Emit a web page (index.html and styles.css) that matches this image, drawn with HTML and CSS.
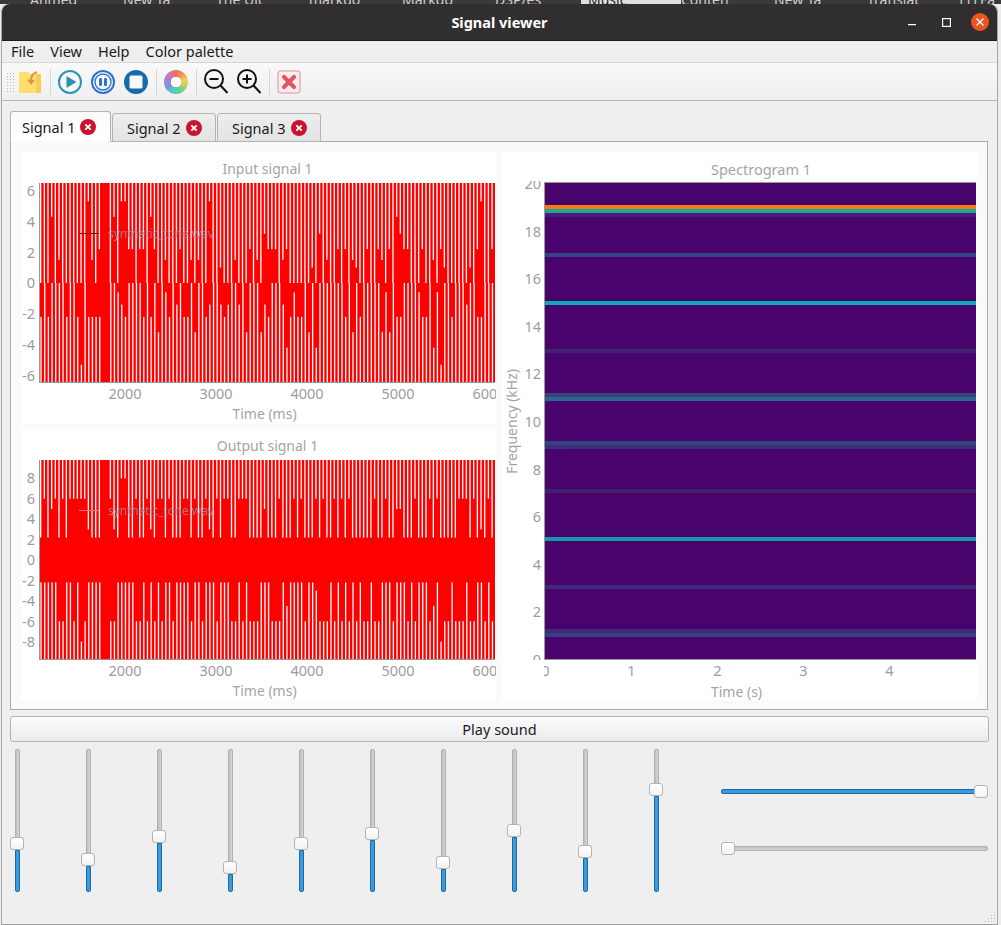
FILE: index.html
```html
<!DOCTYPE html>
<html lang="en">
<head>
    <meta charset="UTF-8">
    <title>Signal viewer</title>
    <link rel="stylesheet" href="styles.css">
</head>
<body>
    <div class="browser-tabs">
        <span>Ahmed</span><span>New Ta</span><span>The Ult</span><span>markdo</span><span>Markdo</span><span>DSP/es</span>
        <span class="browser-tab-active">Music</span><span>Conten</span><span>New Ta</span><span>Translat</span><span>(1) Fa</span>
    </div>

    <div class="window">
        <div class="titlebar">
            <span class="title">Signal viewer</span>
            <svg class="win-btn win-min" width="8" height="8" viewBox="0 0 8 8"><rect y="6" width="8" height="1.2" fill="#fff"/></svg>
            <svg class="win-btn win-max" width="9" height="9" viewBox="0 0 9 9"><rect x=".6" y=".6" width="7.8" height="7.8" fill="none" stroke="#fff" stroke-width="1.2"/></svg>
            <svg class="win-btn win-close" width="18" height="18" viewBox="0 0 18 18"><circle cx="9" cy="9" r="9" fill="#e95420"/><path d="M5.5 5.5l7 7M12.500 5.5l-7 7" stroke="#fff" stroke-width="1.3"/></svg>
        </div>

        <div class="menubar">
            <span>File</span><span>View</span><span>Help</span><span>Color palette</span>
        </div>

        <div class="toolbar">
            <div class="tool-handle"></div>
            <div class="tool">
                <svg width="24" height="24" viewBox="0 0 24 24">
                    <path d="M1 2h9l2 2h5l6 0v19H1z" fill="#fbe06c"/>
                    <path d="M18 4h5v19h-5z" fill="#f6cf58"/>
                    <path d="M19 2c-3 1-6 3-6 8" fill="none" stroke="#f0903c" stroke-width="2"/>
                    <path d="M9 9.500l4 5.500 4-5z" fill="#f0903c"/>
                </svg>
            </div>
            <div class="tool-sep"></div>
            <div class="tool">
                <svg width="26" height="26" viewBox="0 0 26 26">
                    <circle cx="13" cy="13" r="11" fill="#f8f8f8" stroke="#2a93b8" stroke-width="2"/>
                    <path d="M9.500 7l10 6-10 6z" fill="#2a93b8"/>
                </svg>
            </div>
            <div class="tool">
                <svg width="26" height="26" viewBox="0 0 26 26">
                    <circle cx="13" cy="13" r="11" fill="#f8f8f8" stroke="#2d74cf" stroke-width="2"/>
                    <circle cx="13" cy="13" r="8" fill="none" stroke="#2d74cf" stroke-width="1.4"/>
                    <rect x="9" y="9" width="3" height="8" rx="1.2" fill="#2d74cf"/>
                    <rect x="14" y="9" width="3" height="8" rx="1.2" fill="#2d74cf"/>
                </svg>
            </div>
            <div class="tool">
                <svg width="26" height="26" viewBox="0 0 26 26">
                    <circle cx="13" cy="13" r="12" fill="#1a69ad"/>
                    <rect x="6.500" y="6.500" width="13" height="13" rx="1.500" fill="#f6f8fa"/>
                </svg>
            </div>
            <div class="tool-sep"></div>
            <div class="tool"><div class="wheel"></div></div>
            <div class="tool-sep"></div>
            <div class="tool">
                <svg width="26" height="26" viewBox="0 0 26 26">
                    <circle cx="11" cy="10" r="9" fill="none" stroke="#111" stroke-width="2"/>
                    <path d="M6.500 10h9M17.500 16.500l7 7.500" stroke="#111" stroke-width="2" fill="none"/>
                </svg>
            </div>
            <div class="tool">
                <svg width="26" height="26" viewBox="0 0 26 26">
                    <circle cx="11" cy="10" r="9" fill="none" stroke="#111" stroke-width="2"/>
                    <path d="M6.500 10h9M11 5.500v9M17.500 16.500l7 7.500" stroke="#111" stroke-width="2" fill="none"/>
                </svg>
            </div>
            <div class="tool-sep"></div>
            <div class="tool">
                <svg width="24" height="24" viewBox="0 0 24 24">
                    <rect x="1" y="1" width="22" height="22" rx="3" fill="#f8eef0" stroke="#eeb0b6" stroke-width="1.600"/>
                    <path d="M7 7l10 10M17 7L7 17" stroke="#e25563" stroke-width="4.200" stroke-linecap="round"/>
                </svg>
            </div>
        </div>

        <div class="content">
            <div class="tabs">
                <div class="tab tab-active">Signal 1
                    <svg class="tab-x" width="16" height="16" viewBox="0 0 16 16"><circle cx="8" cy="8" r="8" fill="#c8152f"/><path d="M5.300 5.300l5.400 5.400M10.700 5.300l-5.400 5.400" stroke="#fff" stroke-width="1.800"/></svg>
                </div>
                <div class="tab">Signal 2
                    <svg class="tab-x" width="16" height="16" viewBox="0 0 16 16"><circle cx="8" cy="8" r="8" fill="#c8152f"/><path d="M5.300 5.300l5.400 5.400M10.700 5.300l-5.400 5.400" stroke="#fff" stroke-width="1.800"/></svg>
                </div>
                <div class="tab">Signal 3
                    <svg class="tab-x" width="16" height="16" viewBox="0 0 16 16"><circle cx="8" cy="8" r="8" fill="#c8152f"/><path d="M5.300 5.300l5.400 5.400M10.700 5.300l-5.400 5.400" stroke="#fff" stroke-width="1.800"/></svg>
                </div>
            </div>

            <div class="pane">
                <div class="plots-left">
                    <div class="plot-card">
                        <div class="plot-title">Input signal 1</div>
                        <div class="y-ticks y-ticks-input">
                            <span>6</span><span>4</span><span>2</span><span>0</span><span>-2</span><span>-4</span><span>-6</span>
                        </div>
                        <div class="plot-area">
                            <canvas id="inputPlot" width="457" height="200"></canvas>
                            <div class="legend"><i class="legend-line legend-dark"></i>synthetic_tone.wav</div>
                        </div>
                        <div class="x-ticks">
                            <span>2000</span><span>3000</span><span>4000</span><span>5000</span><span>6000</span>
                        </div>
                        <div class="axis-title">Time (ms)</div>
                    </div>

                    <div class="plot-card plot-card-low">
                        <div class="plot-title">Output signal 1</div>
                        <div class="y-ticks y-ticks-output">
                            <span>8</span><span>6</span><span>4</span><span>2</span><span>0</span><span>-2</span><span>-4</span><span>-6</span><span>-8</span>
                        </div>
                        <div class="plot-area">
                            <canvas id="outputPlot" width="457" height="200"></canvas>
                            <div class="legend"><i class="legend-line"></i>synthetic_tone.wav</div>
                        </div>
                        <div class="x-ticks">
                            <span>2000</span><span>3000</span><span>4000</span><span>5000</span><span>6000</span>
                        </div>
                        <div class="axis-title">Time (ms)</div>
                    </div>
                </div>

                <div class="spectro-card">
                    <div class="plot-title spectro-title">Spectrogram 1</div>
                    <div class="freq-label">Frequency (kHz)</div>
                    <div class="freq-ticks">
                        <div class="freq-ticks-inner">
                            <span>20</span><span>18</span><span>16</span><span>14</span><span>12</span><span>10</span><span>8</span><span>6</span><span>4</span><span>2</span><span>0</span>
                        </div>
                    </div>
                    <canvas id="spectrogram" width="432" height="478"></canvas>
                    <div class="sec-ticks">
                        <div class="sec-ticks-inner">
                            <span>0</span><span>1</span><span>2</span><span>3</span><span>4</span>
                        </div>
                    </div>
                    <div class="axis-title sec-title">Time (s)</div>
                </div>
            </div>

            <button class="play-btn">Play sound</button>

            <div class="controls">
                <div class="eq">
                    <div class="vslider"><div class="vtrack"></div><div class="thumb"></div><div class="vfill" style="height: 42px"></div></div>
                    <div class="vslider"><div class="vtrack"></div><div class="thumb"></div><div class="vfill" style="height: 26px"></div></div>
                    <div class="vslider"><div class="vtrack"></div><div class="thumb"></div><div class="vfill" style="height: 49px"></div></div>
                    <div class="vslider"><div class="vtrack"></div><div class="thumb"></div><div class="vfill" style="height: 18px"></div></div>
                    <div class="vslider"><div class="vtrack"></div><div class="thumb"></div><div class="vfill" style="height: 42px"></div></div>
                    <div class="vslider"><div class="vtrack"></div><div class="thumb"></div><div class="vfill" style="height: 52px"></div></div>
                    <div class="vslider"><div class="vtrack"></div><div class="thumb"></div><div class="vfill" style="height: 23px"></div></div>
                    <div class="vslider"><div class="vtrack"></div><div class="thumb"></div><div class="vfill" style="height: 55px"></div></div>
                    <div class="vslider"><div class="vtrack"></div><div class="thumb"></div><div class="vfill" style="height: 34px"></div></div>
                    <div class="vslider"><div class="vtrack"></div><div class="thumb"></div><div class="vfill" style="height: 96px"></div></div>
                </div>
                <div class="hsliders">
                    <div class="hslider"><div class="hfill"></div><div class="thumb"></div></div>
                    <div class="hslider"><div class="thumb"></div><div class="htrack"></div></div>
                </div>
            </div>
        </div>

        <svg class="grip" width="12" height="12" viewBox="0 0 12 12" fill="#b4b4b4">
            <rect x="10" y="1" width="1" height="1"/>
            <rect x="7" y="4" width="1" height="1"/><rect x="10" y="4" width="1" height="1"/>
            <rect x="4" y="7" width="1" height="1"/><rect x="7" y="7" width="1" height="1"/><rect x="10" y="7" width="1" height="1"/>
            <rect x="1" y="10" width="1" height="1"/><rect x="4" y="10" width="1" height="1"/><rect x="7" y="10" width="1" height="1"/><rect x="10" y="10" width="1" height="1"/>
        </svg>
    </div>

    <script src="script.js"></script>
</body>
</html>
```

FILE: styles.css
```css
* {
    box-sizing: border-box;
}
body {
    margin: 0;
    width: 1001px;
    height: 925px;
    overflow: hidden;
    background: #ececec;
    font-family: "Noto Sans", sans-serif;
    font-size: 14.5px;
    color: #1a1a1a;
}

.browser-tabs {
    display: grid;
    grid-template-columns: repeat(11, 93px);
    height: 4px;
    padding-left: 30px;
    overflow: hidden;
    background: #3b3a3a;
    color: #cfcfcf;
    font-size: 14px;
    line-height: 0;
}
.browser-tab-active {
    color: #222;
    background: #e0e0e0;
    margin-left: -7px;
    padding-left: 7px;
}

.window {
    position: relative;
    width: 997px;
    height: 921px;
    margin-left: 1px;
    background: #efefef;
    border-left: 1px solid #a8a8a8;
    border-right: 1px solid #a8a8a8;
    border-bottom: 1px solid #a0a0a0;
    border-radius: 8px 8px 0 0;
}

.titlebar {
    position: relative;
    display: flex;
    align-items: center;
    justify-content: center;
    height: 37px;
    background: #302e2e;
    border-bottom: 1px solid #1c1b1b;
    border-radius: 8px 8px 0 0;
}
.title {
    color: #fff;
    font-weight: 700;
    font-size: 14.5px;
}
.win-btn {
    position: absolute;
}
.win-min {
    left: 906px;
    top: 14px;
}
.win-max {
    left: 940px;
    top: 14px;
}
.win-close {
    left: 969px;
    top: 9px;
}

.menubar {
    display: flex;
    gap: 16px;
    align-items: center;
    height: 21px;
    padding: 0 0 2px 9px;
    background: #eeeeee;
}

.toolbar {
    display: flex;
    align-items: center;
    height: 39px;
    padding-left: 4px;
    background: linear-gradient(#f9f9f9, #efefef);
    border-top: 1px solid #d6d6d6;
    border-bottom: 1px solid #b8b8b8;
}
.tool-handle {
    width: 7.5px;
    height: 20px;
    background-image: radial-gradient(#bbbbbb 0.7px, transparent 0.8px);
    background-size: 3px 3px;
}
.tool {
    display: flex;
    align-items: center;
    justify-content: center;
    width: 33px;
}
.tool-sep {
    width: 7px;
    height: 26px;
    background: linear-gradient(#d6d6d6, #d6d6d6) center / 1px 100% no-repeat;
}
.wheel {
    width: 24px;
    height: 24px;
    border-radius: 50%;
    background:
        radial-gradient(#fdfdfd 0 5px, transparent 5.5px),
        conic-gradient(#ee6e5e, #f19a4e, #f3cf5c, #a9d468, #62cf93, #5cc7c4, #6f9be0, #a283dc, #cf78b8, #ee6e5e);
}

.content {
    padding: 10px 8px 0 8px;
}

.tabs {
    display: flex;
    gap: 1px;
    align-items: flex-end;
    height: 31px;
    margin-bottom: -1px;
}
.tab {
    position: relative;
    display: flex;
    align-items: center;
    gap: 5px;
    width: 104px;
    height: 29px;
    padding: 0 0 0 14px;
    background: linear-gradient(#ededed, #e3e3e3);
    border: 1px solid #b4b4b4;
    border-radius: 3px 3px 0 0;
}
.tab-active {
    gap: 4px;
    width: 101px;
    height: 31px;
    padding-left: 11px;
    background: linear-gradient(#fafafa, #ffffff);
    border-bottom: 1px solid #fafafa;
    z-index: 1;
}

.pane {
    display: flex;
    gap: 6px;
    width: 978px;
    height: 569px;
    padding: 10px;
    background: #fafafa;
    border: 1px solid #aaaaaa;
}
.plots-left {
    display: flex;
    flex-direction: column;
    gap: 5px;
    width: 475px;
}
.plot-card {
    display: grid;
    grid-template-columns: 18px 457px;
    grid-template-rows: 31px 200px 20px 1fr;
    height: 272px;
    background: #fff;
    color: #a2a2a2;
}
.plot-card-low {
    height: 271px;
}
.plot-title {
    grid-column: 1 / -1;
    padding-top: 7px;
    padding-left: 18px;
    text-align: center;
    font-size: 14px;
    line-height: 20px;
    color: #a4a4a4;
}
.spectro-title {
    padding-left: 44px;
    font-size: 14.5px;
}
.y-ticks {
    display: flex;
    flex-direction: column;
    justify-content: space-between;
    align-items: flex-end;
    padding-right: 4px;
    line-height: 14px;
    color: #9c9ca0;
}
.y-ticks-input {
    padding-bottom: 1px;
}
.y-ticks-output {
    padding-top: 10px;
    padding-bottom: 12px;
}
.y-ticks span,
.freq-ticks span {
    white-space: nowrap;
}
.plot-area {
    position: relative;
    line-height: 0;
}
.legend {
    position: absolute;
    left: 40px;
    top: 41px;
    display: flex;
    align-items: center;
    gap: 9px;
    height: 18px;
    line-height: 18px;
    color: rgba(150, 150, 170, 0.8);
    font-size: 11.8px;
}
.legend-line {
    width: 20px;
    height: 1px;
    background: #ff6a6a;
}
.legend-dark {
    background: #7a1010;
}
.x-ticks {
    grid-column: 2;
    display: flex;
    padding-left: 40.5px;
    overflow: hidden;
    line-height: 20px;
    color: #9c9ca0;
}
.x-ticks span {
    flex: 0 0 91px;
    text-align: center;
}
.axis-title {
    grid-column: 1 / -1;
    padding-left: 12px;
    text-align: center;
    font-size: 14px;
    line-height: 21px;
    color: #a4a4a4;
}

.spectro-card {
    display: grid;
    grid-template-columns: 20px 22px 432px;
    grid-template-rows: 30px 478px 21px 1fr;
    width: 475px;
    height: 548px;
    background: #fff;
}
.freq-label {
    grid-row: 2;
    justify-self: center;
    align-self: center;
    writing-mode: vertical-rl;
    transform: rotate(180deg);
    font-size: 14px;
    line-height: 18px;
    color: #a4a4a4;
}
.freq-ticks {
    grid-row: 2;
    overflow: hidden;
    margin-top: -1px;
    padding-top: 1px;
}
.freq-ticks-inner {
    display: flex;
    flex-direction: column;
    justify-content: space-between;
    align-items: flex-end;
    height: 490px;
    margin-top: -6px;
    padding-right: 3px;
    line-height: 14px;
    color: #9c9ca0;
}
.sec-ticks {
    grid-column: 3;
    overflow: hidden;
    line-height: 20px;
    color: #9c9ca0;
}
.sec-ticks-inner {
    display: flex;
    margin-left: -41.5px;
}
.sec-ticks span {
    flex: 0 0 86px;
    text-align: center;
}
.sec-title {
    padding-left: 0;
    padding-right: 5px;
}

.play-btn {
    display: block;
    width: 979px;
    height: 26px;
    margin-top: 6px;
    padding: 0;
    background: linear-gradient(#fbfbfb, #ececec);
    border: 1px solid #b4b4b4;
    border-radius: 3px;
    font-family: inherit;
    font-size: 14.5px;
    color: #1a1a2a;
}

.controls {
    display: flex;
    justify-content: space-between;
    margin-top: 7px;
}
.eq {
    display: flex;
    gap: 57px;
}
.vslider {
    display: flex;
    flex-direction: column;
    align-items: center;
    width: 14px;
    height: 143px;
}
.vtrack {
    flex: 1;
    width: 5px;
    margin-bottom: -1px;
    background: linear-gradient(90deg, #bdbdbd, #d8d8d8);
    border: 1px solid #b0b0b0;
    border-radius: 2px 2px 0 0;
}
.vfill {
    width: 5px;
    background: #3a9be0;
    border: 1px solid #20689f;
    border-radius: 0 0 2px 2px;
}
.thumb {
    position: relative;
    flex: none;
    width: 14px;
    height: 13px;
    background: linear-gradient(#ffffff, #f2f2f2);
    border: 1px solid #b4b4b4;
    border-radius: 3px;
    z-index: 1;
}
.hsliders {
    display: flex;
    flex-direction: column;
    gap: 44px;
    width: 267px;
    margin-right: 1px;
    padding-top: 36px;
}
.hslider {
    display: flex;
    align-items: center;
    height: 13px;
}
.hfill {
    flex: 1;
    height: 5px;
    margin-right: -1px;
    background: #3a9be0;
    border: 1px solid #20689f;
    border-radius: 2px 0 0 2px;
}
.htrack {
    flex: 1;
    height: 5px;
    margin-left: -1px;
    background: linear-gradient(#bdbdbd, #d8d8d8);
    border: 1px solid #b0b0b0;
    border-radius: 0 2px 2px 0;
}

.grip {
    position: absolute;
    right: 1px;
    bottom: 1px;
}
```

FILE: script.js
```js
// small seeded random so the picture is the same every load
let seed = 1;
function rnd() {
    seed = (seed * 48271) % 2147483647;
    return seed / 2147483647;
}

function pick(table) {
    let r = rnd();
    for (const [level, chance] of table) {
        if (r < chance) return level;
        r -= chance;
    }
    return table[table.length - 1][0];
}

const PERIOD = 3.67;

function drawSignal(id, zero, scale, topLevels, bottomLevels) {
    const canvas = document.getElementById(id);
    const ctx = canvas.getContext('2d');
    const w = canvas.width;
    const h = canvas.height;
    ctx.fillStyle = '#ff0000';
    ctx.fillRect(0, 0, w - 1, h);
    ctx.fillStyle = '#ffffff';
    seed = 987654321;
    for (let x = 1; x < w - 3; x += PERIOD) {
        const top = pick(topLevels);
        const bottom = pick(bottomLevels);
        // one wider bar near the start of the recording
        if (x > 62 && x < 68) continue;
        ctx.fillRect(x, 0, 1.3, zero - top * scale);
        const y = zero - bottom * scale;
        ctx.fillRect(x + 0.4, y, 1.3, h - y);
    }
    // axis lines
    ctx.fillStyle = '#9a9a9a';
    ctx.fillRect(0, h - 1, w - 1, 1);
    ctx.fillRect(0, 0, 1, h);
}

drawSignal('inputPlot', 100, 15.4,
    [[0, 0.6], [1.5, 0.12], [2.2, 0.16], [1, 0.03], [3.2, 0.03], [4.3, 0.03], [5.3, 0.03]],
    [[0, 0.5], [-0.6, 0.05], [-1.4, 0.1], [-2.2, 0.22], [-3.2, 0.06], [-4.2, 0.04], [-5.3, 0.03]]);

drawSignal('outputPlot', 100, 10.2,
    [[6, 0.42], [2.2, 0.5], [5, 0.03], [3, 0.03], [8, 0.02]],
    [[-6, 0.38], [-2.2, 0.54], [-4.5, 0.03], [-3, 0.03], [-8, 0.02]]);

// y, height, colour of each band in the spectrogram
const bands = [
    [23, 4, '#f57c0c'], [27, 4, '#1fa59a'], [31, 4, '#4c1a78'],
    [71, 4, '#304485'], [119, 4, '#0ea9b8'], [167, 4, '#43226f'],
    [211, 4, '#3a3f7d'], [215, 4, '#2a6490'], [259, 4, '#35447f'], [263, 4, '#3f2f78'],
    [307, 4, '#43206f'], [355, 4, '#1596ae'], [403, 4, '#432a78'],
    [447, 4, '#41287a'], [451, 4, '#35407f']
];

const spec = document.getElementById('spectrogram').getContext('2d');
spec.fillStyle = '#48046c';
spec.fillRect(0, 0, 432, 478);
for (const [y, height, colour] of bands) {
    spec.fillStyle = colour;
    spec.fillRect(0, y, 432, height);
}
spec.fillStyle = '#9a9a9a';
spec.fillRect(0, 0, 432, 1);
spec.fillRect(0, 477, 432, 1);
spec.fillRect(0, 0, 1, 478);
```
